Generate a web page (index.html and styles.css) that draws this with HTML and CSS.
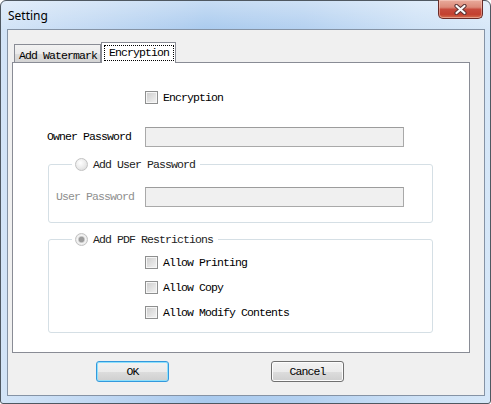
FILE: index.html
```html
<!DOCTYPE html>
<html lang="en">
  <head>
    <meta charset="utf-8" />
    <title>Setting</title>
    <link rel="stylesheet" href="styles.css">
  </head>
  <body>
    <div class="window">
      <div class="titlebar">
        <span class="title">Setting</span>
        <button class="close" title="Close">
          <svg width="13" height="11" viewBox="0 0 13 11">
            <path d="M2.5 2 L10.5 9 M10.5 2 L2.5 9" stroke="#5b3434" stroke-width="4.2" stroke-linecap="round" />
            <path d="M2.5 2 L10.5 9 M10.5 2 L2.5 9" stroke="#fbfbfb" stroke-width="2.2" stroke-linecap="round" />
          </svg>
        </button>
      </div>

      <div class="client">
        <div class="tabs">
          <div class="tab">Add Watermark</div>
          <div class="tab active"><span class="focus">Encryption</span></div>
        </div>

        <div class="pane">
          <div class="check-row enc"><span class="box"></span>Encryption</div>

          <div class="field owner">
            <span class="lbl">Owner Password</span>
            <span class="input"></span>
          </div>

          <div class="group user-group">
            <div class="legend"><span class="radio"></span>Add User Password</div>
            <div class="field user">
              <span class="lbl dim">User Password</span>
              <span class="input"></span>
            </div>
          </div>

          <div class="group restrict-group">
            <div class="legend"><span class="radio on"></span>Add PDF Restrictions</div>
            <div class="checks">
              <div class="check-row"><span class="box"></span>Allow Printing</div>
              <div class="check-row"><span class="box"></span>Allow Copy</div>
              <div class="check-row"><span class="box"></span>Allow Modify Contents</div>
            </div>
          </div>
        </div>

        <div class="buttons">
          <button class="btn default">OK</button>
          <button class="btn cancel">Cancel</button>
        </div>
      </div>
    </div>
  </body>
</html>
```

FILE: styles.css
```css
html,
body {
  margin: 0;
  padding: 0;
  width: 491px;
  height: 404px;
  overflow: hidden;
  background: #ffffff;
}

.window {
  width: 491px;
  height: 404px;
  box-sizing: border-box;
  border: 1px solid #4f5861;
  border-radius: 6px 6px 3px 3px;
  padding: 0 5px 7px 6px;
  display: flex;
  flex-direction: column;
  background:
    linear-gradient(to bottom, rgba(255, 255, 255, 0.35), rgba(255, 255, 255, 0) 30px),
    linear-gradient(to right, #d3e4f7 0%, #c2d9f3 18%, #a9caee 42%, #b3d0f0 62%, #cde1f6 85%, #d6e7f8 100%);
  font-family: "Liberation Mono", "DejaVu Sans Mono", monospace;
  font-size: 11.5px;
  letter-spacing: -0.9px;
  color: #000;
}

/* title bar */
.titlebar {
  height: 28px;
  display: flex;
  align-items: flex-start;
}

.title {
  font-family: "Noto Sans", "Open Sans", sans-serif;
  font-size: 12px;
  letter-spacing: 0;
  margin-top: 6px;
  margin-left: 1px;
  color: #000;
}

.close {
  margin-left: auto;
  margin-right: 2px;
  margin-top: -1px;
  width: 45px;
  height: 19px;
  padding: 0;
  border: 1px solid #6a2b27;
  border-top: none;
  border-radius: 0 0 5px 5px;
  background: linear-gradient(to bottom, #e9ab9c 0%, #dc8a79 40%, #c74b3d 52%, #c3402f 80%, #d4704f 100%);
  box-shadow: inset 0 0 0 1px rgba(255, 220, 210, 0.45);
  display: flex;
  align-items: center;
  justify-content: center;
}

/* client area */
.client {
  flex: 1;
  background: #f0f0f0;
  border: 1px solid #8593a5;
  padding-top: 12px;
  display: flex;
  flex-direction: column;
}

.tabs {
  height: 20px;
  display: flex;
  align-items: flex-end;
  padding-left: 6px;
}

.tab {
  height: 18px;
  width: 87px;
  box-sizing: border-box;
  border: 1px solid #898c95;
  border-bottom: none;
  background: linear-gradient(to bottom, #f2f2f2 0%, #ebebeb 50%, #dddddd 51%, #d4d4d4 100%);
  padding: 4px 0 0 4px;
  line-height: 13px;
}

.tab.active {
  position: relative;
  z-index: 1;
  width: 75px;
  height: 21px;
  margin-bottom: -1px;
  background: #fff;
  padding: 2px 0 0 2px;
}

.focus {
  display: block;
  width: 70px;
  height: 16px;
  box-sizing: border-box;
  border: 1px dotted #000;
  padding: 0 0 0 4px;
  line-height: 14px;
}

.pane {
  margin-left: 4px;
  width: 458px;
  height: 291px;
  box-sizing: border-box;
  border: 1px solid #898c95;
  background: #fff;
}

/* controls */
.check-row {
  height: 13px;
  display: flex;
  align-items: center;
  gap: 5px;
  line-height: 13px;
}

.enc {
  margin-top: 28px;
  padding-left: 132px;
}

.box {
  width: 13px;
  height: 13px;
  flex: none;
  box-sizing: border-box;
  border: 1px solid #8e8f8f;
  background: linear-gradient(135deg, #cbcbcb 0%, #e2e2e2 55%, #f4f4f4 100%);
  box-shadow: inset 0 0 0 1px #f6f6f6;
}

.radio {
  width: 13px;
  height: 13px;
  flex: none;
  box-sizing: border-box;
  border: 1px solid #c2c2c2;
  border-radius: 50%;
  background: radial-gradient(circle at 40% 35%, #ffffff 0%, #ececec 50%, #d6d6d6 100%);
}

.radio.on {
  background: radial-gradient(circle at 50% 50%, #9c9c9c 0 2.5px, #c8c8c8 3px, #f4f4f4 4px, #d9d9d9 100%);
}

.field {
  display: flex;
  align-items: center;
  height: 20px;
}

.owner {
  margin-top: 23px;
  margin-left: 34px;
}

.owner .lbl {
  width: 98px;
}

.lbl {
  line-height: 13px;
  margin-top: -2px;
}

.lbl.dim {
  color: #8f8f8f;
}

.input {
  width: 259px;
  height: 20px;
  box-sizing: border-box;
  border: 1px solid #a9a9a9;
  border-top-color: #9c9c9c;
  background: #f0f0f0;
}

.group {
  margin-left: 35px;
  width: 385px;
  box-sizing: border-box;
  border: 1px solid #d5dfe5;
  border-radius: 3px;
}

.user-group {
  margin-top: 17px;
  height: 59px;
}

.restrict-group {
  margin-top: 16px;
  height: 94px;
}

.legend {
  margin: -7px 0 0 23px;
  width: fit-content;
  height: 13px;
  padding: 0 5px 0 3px;
  display: flex;
  align-items: center;
  gap: 5px;
  background: #fff;
  color: #222;
  line-height: 13px;
}

.user {
  margin-top: 16px;
  padding-left: 7px;
}

.user .lbl {
  width: 89px;
}

.checks {
  margin-top: 10px;
  padding-left: 96px;
  display: flex;
  flex-direction: column;
  gap: 12px;
}

/* buttons */
.buttons {
  display: flex;
  margin-top: 8px;
  padding-left: 88px;
}

.btn {
  width: 73px;
  height: 21px;
  padding: 0;
  box-sizing: border-box;
  border: 1px solid #707070;
  border-radius: 3px;
  background: linear-gradient(to bottom, #f2f2f2 0%, #ebebeb 50%, #dddddd 51%, #cfcfcf 100%);
  box-shadow: inset 0 0 0 1px #fcfcfc;
  font-family: "Liberation Mono", "DejaVu Sans Mono", monospace;
  font-size: 11.5px;
  letter-spacing: -0.9px;
  color: #000;
  line-height: 18px;
}

.btn.default {
  border-color: #3399dd;
  box-shadow: inset 0 0 0 1px #8fe0fb;
}

.btn.cancel {
  margin-left: 102px;
}
```
